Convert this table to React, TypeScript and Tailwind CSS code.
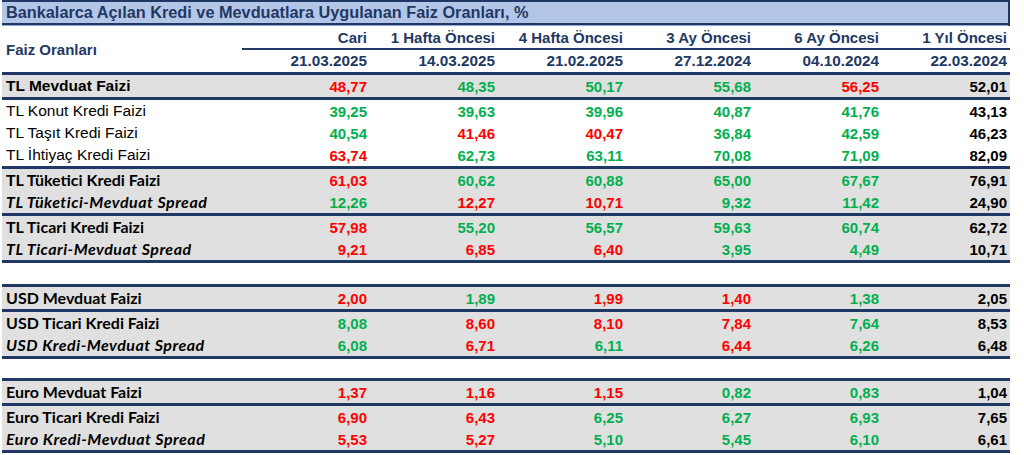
import React from 'react';

type Tone = 'r' | 'g' | 'k';
type Row = {
  label: string;
  style: 'arialBold' | 'arial' | 'calBold' | 'calItalic';
  vals: [string, Tone][];
};

const toneClass: Record<Tone, string> = {
  r: 'text-[#ff0000]',
  g: 'text-[#00b050]',
  k: 'text-black',
};

const labelClass: Record<Row['style'], string> = {
  arialBold: "font-['Liberation_Sans',Arial,sans-serif] font-bold text-[15.5px]",
  arial: "font-['Liberation_Sans',Arial,sans-serif] text-[15.5px]",
  calBold: "font-['Lato',sans-serif] font-bold text-[16px]",
  calItalic: "font-['Lato',sans-serif] font-bold italic text-[16px] tracking-[0.5px]",
};

const v = (s: string): [string, Tone][] =>
  s.split(' ').map((t) => [t.slice(1), t[0] as Tone]);

type Grp = { rows: Row[]; gray: boolean; topLine?: boolean };

const tl: Grp[] = [
  {
    gray: true,
    rows: [{ label: 'TL Mevduat Faizi', style: 'arialBold', vals: v('r48,77 g48,35 g50,17 g55,68 r56,25 k52,01') }],
  },
  {
    gray: false,
    rows: [
      { label: 'TL Konut Kredi Faizi', style: 'arial', vals: v('g39,25 g39,63 g39,96 g40,87 g41,76 k43,13') },
      { label: 'TL Taşıt Kredi Faizi', style: 'arial', vals: v('g40,54 r41,46 r40,47 g36,84 g42,59 k46,23') },
      { label: 'TL İhtiyaç Kredi Faizi', style: 'arial', vals: v('r63,74 g62,73 g63,11 g70,08 g71,09 k82,09') },
    ],
  },
  {
    gray: true,
    rows: [
      { label: 'TL Tüketici Kredi Faizi', style: 'calBold', vals: v('r61,03 g60,62 g60,88 g65,00 g67,67 k76,91') },
      { label: 'TL Tüketici-Mevduat Spread', style: 'calItalic', vals: v('g12,26 r12,27 r10,71 g9,32 g11,42 k24,90') },
    ],
  },
  {
    gray: true,
    rows: [
      { label: 'TL Ticari Kredi Faizi', style: 'calBold', vals: v('r57,98 g55,20 g56,57 g59,63 g60,74 k62,72') },
      { label: 'TL Ticari-Mevduat Spread', style: 'calItalic', vals: v('r9,21 r6,85 r6,40 g3,95 g4,49 k10,71') },
    ],
  },
];

const usd: Grp[] = [
  {
    gray: true,
    topLine: true,
    rows: [{ label: 'USD Mevduat Faizi', style: 'calBold', vals: v('r2,00 g1,89 r1,99 r1,40 g1,38 k2,05') }],
  },
  {
    gray: true,
    rows: [
      { label: 'USD Ticari Kredi Faizi', style: 'calBold', vals: v('g8,08 r8,60 r8,10 r7,84 g7,64 k8,53') },
      { label: 'USD Kredi-Mevduat Spread', style: 'calItalic', vals: v('g6,08 r6,71 g6,11 r6,44 g6,26 k6,48') },
    ],
  },
];

const euro: Grp[] = [
  {
    gray: true,
    topLine: true,
    rows: [{ label: 'Euro Mevduat Faizi', style: 'calBold', vals: v('r1,37 r1,16 r1,15 g0,82 g0,83 k1,04') }],
  },
  {
    gray: true,
    rows: [
      { label: 'Euro Ticari Kredi Faizi', style: 'calBold', vals: v('r6,90 r6,43 g6,25 g6,27 g6,93 k7,65') },
      { label: 'Euro Kredi-Mevduat Spread', style: 'calItalic', vals: v('r5,53 r5,27 g5,10 g5,45 g6,10 k6,61') },
    ],
  },
];

const heads = ['Cari', '1 Hafta Öncesi', '4 Hafta Öncesi', '3 Ay Öncesi', '6 Ay Öncesi', '1 Yıl Öncesi'];
const dates = ['21.03.2025', '14.03.2025', '21.02.2025', '27.12.2024', '04.10.2024', '22.03.2024'];

const grid = 'grid grid-cols-[240px_repeat(6,128px)]';

function DataRow({ row }: { row: Row }) {
  return (
    <div className={`${grid} h-[22px] items-center`}>
      <div className={`pl-[4px] whitespace-nowrap leading-none text-black ${labelClass[row.style]}`}>{row.label}</div>
      {row.vals.map(([n, t], i) => (
        <div
          key={i}
          className={`pr-[3px] text-right font-['Liberation_Sans',Arial,sans-serif] font-bold text-[15px] leading-none ${toneClass[t]}`}
        >
          {n}
        </div>
      ))}
    </div>
  );
}

function Group({ g }: { g: Grp }) {
  return (
    <div
      className={`${g.gray ? 'bg-[#e0e0e0]' : 'bg-white'} border-b-[3px] border-[#1f3864] ${
        g.topLine ? 'border-t-[3px]' : ''
      }`}
    >
      {g.rows.map((r) => (
        <DataRow key={r.label} row={r} />
      ))}
    </div>
  );
}

export default function App() {
  return (
    <div className="w-[1024px] h-[455px] bg-white overflow-hidden pl-[2px]">
      <div className="w-[1008px]">
        {/* title */}
        <div className="h-[26px] bg-[#b4c6e7] border-t-[2px] border-t-[#1f3864] border-r-[2px] border-r-[#1f3864] flex flex-col">
          <div className="flex-1 flex items-center pl-[4px]">
            <span className="font-['Liberation_Sans',Arial,sans-serif] font-bold text-[16.3px] text-[#1f3864] leading-none">
              Bankalarca Açılan Kredi ve Mevduatlara Uygulanan Faiz Oranları, %
            </span>
          </div>
          <div className="h-[2px] bg-[#1f3864]" />
          <div className="h-[1px] bg-[#8ea9db]" />
        </div>

        {/* header */}
        <div className={`${grid} border-b-[3px] border-[#1f3864] text-[#1f3864] font-['Liberation_Sans',Arial,sans-serif] font-bold`}>
          <div className="row-span-2 flex items-center pl-[4px] text-[15px] pt-[2px]">Faiz Oranları</div>
          {heads.map((h) => (
            <div key={h} className="h-[24px] flex items-end justify-end pr-[3px] pb-[3px] text-[15px] leading-none border-b-2 border-[#1f3864]">
              {h}
            </div>
          ))}
          {dates.map((d) => (
            <div key={d} className="h-[22px] flex items-center justify-end pr-[3px] text-[15.3px] leading-none">
              {d}
            </div>
          ))}
        </div>

        {tl.map((g, i) => (
          <Group key={i} g={g} />
        ))}
        <div className="h-[21px]" />
        {usd.map((g, i) => (
          <Group key={i} g={g} />
        ))}
        <div className="h-[19px]" />
        {euro.map((g, i) => (
          <Group key={i} g={g} />
        ))}
      </div>
    </div>
  );
}
